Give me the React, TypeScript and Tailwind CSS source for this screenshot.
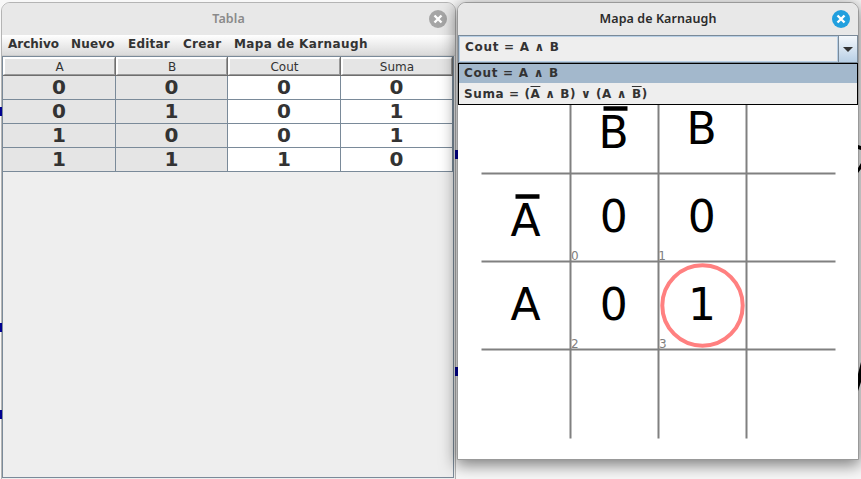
import React from 'react';

const rows = [
  ['0', '0', '0', '0'],
  ['0', '1', '0', '1'],
  ['1', '0', '0', '1'],
  ['1', '1', '1', '0'],
];
const headers = ['A', 'B', 'Cout', 'Suma'];
const sans = "font-['DejaVu_Sans',sans-serif]";

function CloseIcon({ color }: { color: string }) {
  return (
    <svg width="18" height="18" viewBox="0 0 18 18">
      <circle cx="9" cy="9" r="9" fill={color} />
      <path d="M5.5 5.5 12.5 12.5M12.5 5.5 5.5 12.5" stroke="#fff" strokeWidth="2.4" />
    </svg>
  );
}

function TitleBar({ title, active }: { title: string; active: boolean }) {
  return (
    <header className="relative flex h-8 shrink-0 items-center justify-center bg-[#e8e8e8] font-['Noto_Sans',sans-serif] text-[12.5px] font-semibold">
      <span className={active ? 'text-[#2b2b2b] tracking-[0.08px]' : 'text-[#8a8a8a] tracking-[0.1px]'}>{title}</span>
      <div className="absolute right-[8px] top-[7px]">
        <CloseIcon color={active ? '#219fde' : '#a6a6a6'} />
      </div>
    </header>
  );
}

function TableWindow() {
  return (
    <section className="absolute left-px top-[2px] flex h-[490px] w-[455px] flex-col overflow-hidden rounded-t-[9px] border border-[#b4b4b4] bg-[#eee]">
      <TitleBar title="Tabla" active={false} />
      <nav className={`${sans} flex h-[21px] shrink-0 items-center border-b border-[#ccc] bg-linear-to-b from-white to-[#dadada] pb-px text-[12px] leading-[17px] font-bold text-[#333]`}>
        <span className="w-[63px] pl-[6px]">Archivo</span>
        <span className="w-[57px] pl-[6px] tracking-[0.2px]">Nuevo</span>
        <span className="w-[55px] pl-[6px] tracking-[0.2px]">Editar</span>
        <span className="w-[51px] pl-[6px] tracking-[0.3px]">Crear</span>
        <span className="pl-[6px] whitespace-nowrap tracking-[0.4px]">Mapa de Karnaugh</span>
      </nav>
      <div className="flex h-[422px] w-[452px] shrink-0 flex-col border border-[#7a8a99] bg-[#eee]">
        <div className={`${sans} grid h-[19px] w-[450px] shrink-0 grid-cols-[113px_112px_113px_112px] text-[12px] text-[#333]`}>
          {headers.map((h) => (
            <div key={h} className="border-b border-r border-[#6e6e6e]">
              <div className="flex h-[18px] items-center justify-center border-b border-r border-l-2 border-t-2 border-b-[#999] border-l-white border-r-[#999] border-t-white bg-[#e5e5e5] leading-none">
                {h}
              </div>
            </div>
          ))}
        </div>
        {rows.map((r, i) => (
          <div key={i} className={`${sans} grid h-6 w-[450px] shrink-0 grid-cols-[113px_112px_113px_112px] grid-rows-[24px] text-[20px] font-bold text-[#333]`}>
            {r.map((v, j) => (
              <div
                key={j}
                className={`flex items-center justify-center border-b border-r border-[#7a8a99] pb-[2px] leading-[20px] ${j < 2 ? 'bg-[#e5e5e5]' : 'bg-white'}`}
              >
                {v}
              </div>
            ))}
          </div>
        ))}
      </div>
    </section>
  );
}

function KarnaughMap() {
  return (
    <svg className="block overflow-visible font-['DejaVu_Sans',sans-serif]" width="400" height="354" viewBox="458 105 400 354">
      <g stroke="#808080" strokeWidth="2">
        <path d="M570.5 105V438.5M658.5 105V438.5M746.5 105V438.5" />
        <path d="M481.5 173.5H835.5M481.5 261.5H835.5M481.5 349.5H835.5" />
      </g>
      <path d="M603.5 108.5h24M515.5 196.5h24" stroke="#000" strokeWidth="4.4" />
      <g fontSize="44" textAnchor="middle" fill="#000">
        <text x="613.5" y="148">B</text>
        <text x="701.5" y="144">B</text>
        <text x="525.5" y="236">A</text>
        <text x="525.5" y="320">A</text>
        <text x="613.8" y="232">0</text>
        <text x="701.8" y="232">0</text>
        <text x="613.8" y="320">0</text>
        <text x="702" y="320">1</text>
      </g>
      <g fontSize="12" fill="#808080">
        <text x="571" y="260">0</text>
        <text x="658.3" y="260">1</text>
        <text x="571" y="348">2</text>
        <text x="659" y="348">3</text>
      </g>
      <circle cx="702.5" cy="305.5" r="40.2" fill="none" stroke="#ff8080" strokeWidth="4" />
    </svg>
  );
}

function MapWindow() {
  return (
    <section className="absolute left-[457px] top-[2px] flex h-[458px] w-[402px] flex-col overflow-hidden rounded-t-[9px] border border-[#999] bg-white shadow-[0_4px_16px_1px_rgba(0,0,0,0.5)]">
      <TitleBar title="Mapa de Karnaugh" active />
      <div className={`${sans} flex h-7 shrink-0 border border-[#7a8a99] text-[12px] font-bold text-[#333]`}>
        <div className="flex-1 border border-[#b8cfe5] bg-[#eee] pl-[5px] pt-[2px] leading-4">
          <span className="whitespace-pre tracking-[0.7px]">Cout = A ∧ B</span>
        </div>
        <div className="flex w-[19px] items-center justify-center border-l border-[#7a8a99] bg-linear-to-b from-[#f4f8fc] to-[#b8cfe5]">
          <svg width="10" height="5" viewBox="0 0 10 5" className="mt-px">
            <path d="M0 0h10L5 5z" fill="#333" />
          </svg>
        </div>
      </div>
      <ul className={`${sans} h-[42px] shrink-0 border border-black bg-[#eee] text-[12px] font-bold text-[#333]`}>
        <li className="h-[19px] whitespace-pre bg-[#a3b8cc] pl-[5px] leading-[19px] tracking-[0.72px]">Cout = A ∧ B</li>
        <li className="h-[21px] whitespace-pre pl-[5px] leading-[23px] tracking-[0.6px]">
          Suma = (<span className="overline">A</span> ∧ B) ∨ (A ∧ <span className="overline">B</span>)
        </li>
      </ul>
      <KarnaughMap />
    </section>
  );
}

export default function App() {
  return (
    <main className="relative h-[479px] w-[861px] overflow-hidden bg-[#f8f8f8]">
      <TableWindow />
      <div className="absolute left-0 top-[107px] h-[9px] w-[2px] bg-[#000090]" />
      <div className="absolute left-0 top-[323px] h-[9px] w-[2px] bg-[#000090]" />
      <div className="absolute left-0 top-[410px] h-[9px] w-[2px] bg-[#000090]" />
      <MapWindow />
      <div className="absolute left-[455px] top-[150px] h-[9px] w-[3px] bg-[#000070]" />
      <div className="absolute left-[455px] top-[367px] h-[9px] w-[3px] bg-[#000070]" />
      <svg className="absolute left-[858px] top-[140px]" width="3" height="255" viewBox="858 140 3 255">
        <path d="M858 145l3 1v4l-3-1zM861 163v6l-3 4v-5zM858 391V374l3-12v20z" fill="#000" />
      </svg>
    </main>
  );
}
